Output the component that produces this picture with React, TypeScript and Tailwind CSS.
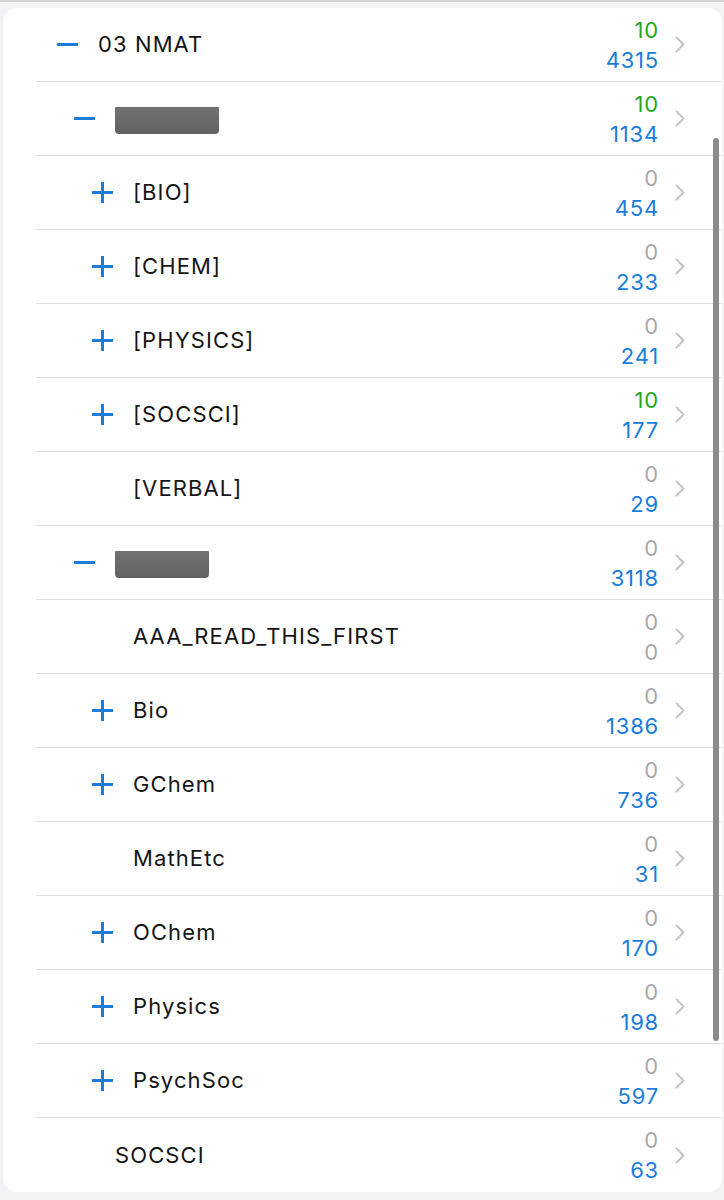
type Row = {
  level: 0 | 1 | 2;
  icon?: 'plus' | 'minus';
  label?: string;
  redact?: number;
  top: number;
  bottom: number;
};

const rows: Row[] = [
  { level: 0, icon: 'minus', label: '03 NMAT', top: 10, bottom: 4315 },
  { level: 1, icon: 'minus', redact: 104, top: 10, bottom: 1134 },
  { level: 2, icon: 'plus', label: '[BIO]', top: 0, bottom: 454 },
  { level: 2, icon: 'plus', label: '[CHEM]', top: 0, bottom: 233 },
  { level: 2, icon: 'plus', label: '[PHYSICS]', top: 0, bottom: 241 },
  { level: 2, icon: 'plus', label: '[SOCSCI]', top: 10, bottom: 177 },
  { level: 2, label: '[VERBAL]', top: 0, bottom: 29 },
  { level: 1, icon: 'minus', redact: 94, top: 0, bottom: 3118 },
  { level: 2, label: 'AAA_READ_THIS_FIRST', top: 0, bottom: 0 },
  { level: 2, icon: 'plus', label: 'Bio', top: 0, bottom: 1386 },
  { level: 2, icon: 'plus', label: 'GChem', top: 0, bottom: 736 },
  { level: 2, label: 'MathEtc', top: 0, bottom: 31 },
  { level: 2, icon: 'plus', label: 'OChem', top: 0, bottom: 170 },
  { level: 2, icon: 'plus', label: 'Physics', top: 0, bottom: 198 },
  { level: 2, icon: 'plus', label: 'PsychSoc', top: 0, bottom: 597 },
  { level: 1, label: 'SOCSCI', top: 0, bottom: 63 },
];

const indent = {
  0: 'pl-[21px]',
  1: 'pl-[38px]',
  2: 'pl-[56px]',
};

function ToggleIcon({ kind }: { kind?: 'plus' | 'minus' }) {
  return (
    <svg className="w-[21px] h-[21px] shrink-0" viewBox="0 0 21 21">
      {kind && <path d="M0 10.5h21" stroke="#1a7ddc" strokeWidth={3} />}
      {kind === 'plus' && <path d="M10.5 0v21" stroke="#1a7ddc" strokeWidth={3} />}
    </svg>
  );
}

function Chevron() {
  return (
    <svg className="w-[10px] h-[17px] shrink-0" viewBox="0 0 10 17" fill="none">
      <path d="M1.5 1.5l7 7-7 7" stroke="#c4c4c7" strokeWidth={2} strokeLinecap="round" strokeLinejoin="round" />
    </svg>
  );
}

function DeckRow({ row, last }: { row: Row; last: boolean }) {
  const due = row.top > 0 ? 'text-[#24a824]' : 'text-[#a9a9ab]';
  const total = row.bottom > 0 ? 'text-[#1a7ddc]' : 'text-[#a9a9ab]';
  return (
    <div className="pl-[33px]">
      <div
        className={`flex items-center h-[74px] pr-[37px] ${last ? '' : 'border-b border-[#dedee0]'} ${indent[row.level]}`}
      >
        <ToggleIcon kind={row.icon} />
        <div className="flex-1 pl-[20px] text-[22px] text-[#151515] tracking-[1.1px]">
          {row.redact ? (
            <div
              className="h-[27px] mt-[3px] rounded-b-[4px] rounded-t-[1px] bg-gradient-to-b from-[#727272] to-[#626262]"
              style={{ width: row.redact }}
            />
          ) : (
            row.label
          )}
        </div>
        <div className="flex flex-col items-end text-[22px] leading-[30px] tracking-[0.8px] mr-[16px]">
          <span className={due}>{row.top}</span>
          <span className={total}>{row.bottom}</span>
        </div>
        <Chevron />
      </div>
    </div>
  );
}

export default function App() {
  return (
    <div
      className="relative w-[724px] h-[1200px] bg-[#f2f2f7] border-t-2 border-[#d2d2d6] pt-[6px] pl-[3px] pr-[2px]"
      style={{ fontFamily: 'Inter, "Noto Sans", sans-serif' }}
    >
      <div className="bg-white rounded-[14px] overflow-hidden">
        {rows.map((row, i) => (
          <DeckRow key={i} row={row} last={i === rows.length - 1} />
        ))}
      </div>
      <div className="absolute left-[713px] top-[136px] w-[6px] h-[903px] rounded-full bg-[#8b8b8d]" />
    </div>
  );
}
